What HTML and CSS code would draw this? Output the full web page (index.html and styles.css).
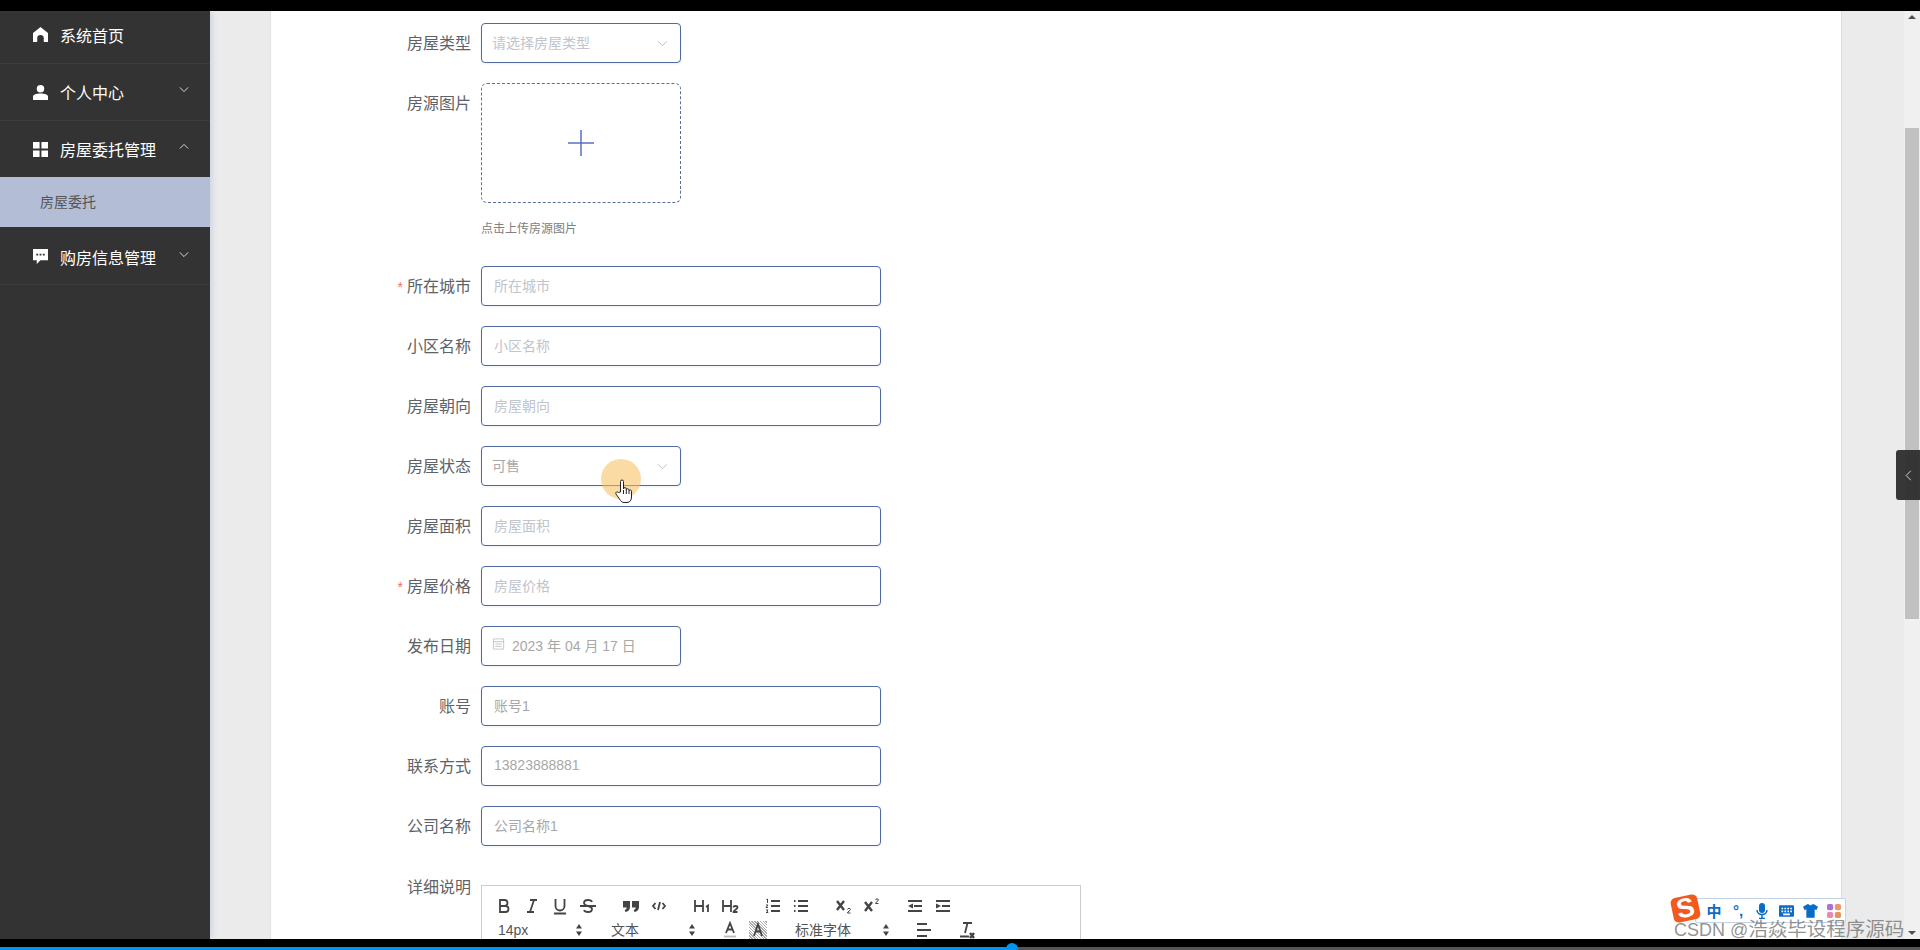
FILE: index.html
```html
<!DOCTYPE html>
<html lang="zh-CN">
<head>
    <meta charset="UTF-8">
    <title>房屋委托</title>
    <link rel="stylesheet" href="styles.css">
</head>
<body>
    <div class="top-bar"></div>
    <div class="app">
        <aside class="sidebar">
            <div class="menu-item menu-first">
                <svg class="menu-icon" viewBox="0 0 16 16"><path d="M8 0 16 6.500V16h-4.500v-4a3.500 3.500 0 0 0-7 0v4H0V6.500z"/></svg>
                <span>系统首页</span>
            </div>
            <div class="menu-item">
                <svg class="menu-icon" viewBox="0 0 16 16"><circle cx="8" cy="4" r="4"/><path d="M0 16v-3.500C0 10 3.500 9 8 9s8 1 8 3.500V16z"/></svg>
                <span>个人中心</span>
                <svg class="menu-arrow" viewBox="0 0 12 8"><path d="M1 1.500 6 6.500 11 1.500"/></svg>
            </div>
            <div class="menu-item menu-open">
                <svg class="menu-icon" viewBox="0 0 16 16"><path d="M0 0h7v7H0zM9 0h7v7H9zM0 9h7v7H0zM9 9h7v7H9z"/></svg>
                <span>房屋委托管理</span>
                <svg class="menu-arrow" viewBox="0 0 12 8"><path d="M1 6.500 6 1.500 11 6.500"/></svg>
            </div>
            <div class="submenu-item">房屋委托</div>
            <div class="menu-item">
                <svg class="menu-icon" viewBox="0 0 16 16"><path fill-rule="evenodd" d="M0 0h16v12H8l-4 4v-4H0zM3.500 5h2v2h-2zM7 5h2v2H7zM10.500 5h2v2h-2z"/></svg>
                <span>购房信息管理</span>
                <svg class="menu-arrow" viewBox="0 0 12 8"><path d="M1 1.500 6 6.500 11 1.500"/></svg>
            </div>
        </aside>

        <main class="content">
            <form class="panel">
                <div class="form-row">
                    <label class="form-label">房屋类型</label>
                    <div class="control select placeholder">请选择房屋类型
                        <svg class="select-arrow" viewBox="0 0 12 8"><path d="M1 1.500 6 6.500 11 1.500"/></svg>
                    </div>
                </div>
                <div class="form-row upload-row">
                    <label class="form-label">房源图片</label>
                    <div>
                        <div class="upload-box">
                            <svg class="upload-plus" viewBox="0 0 26 26"><path d="M13 0v26M0 13h26"/></svg>
                        </div>
                        <div class="upload-hint">点击上传房源图片</div>
                    </div>
                </div>
                <div class="form-row">
                    <label class="form-label required">所在城市</label>
                    <div class="control input placeholder">所在城市</div>
                </div>
                <div class="form-row">
                    <label class="form-label">小区名称</label>
                    <div class="control input placeholder">小区名称</div>
                </div>
                <div class="form-row">
                    <label class="form-label">房屋朝向</label>
                    <div class="control input placeholder">房屋朝向</div>
                </div>
                <div class="form-row">
                    <label class="form-label">房屋状态</label>
                    <div class="control select filled">可售
                        <svg class="select-arrow" viewBox="0 0 12 8"><path d="M1 1.500 6 6.500 11 1.500"/></svg>
                    </div>
                </div>
                <div class="form-row">
                    <label class="form-label">房屋面积</label>
                    <div class="control input placeholder">房屋面积</div>
                </div>
                <div class="form-row">
                    <label class="form-label required">房屋价格</label>
                    <div class="control input placeholder">房屋价格</div>
                </div>
                <div class="form-row">
                    <label class="form-label">发布日期</label>
                    <div class="control date filled">
                        <svg class="date-icon" viewBox="0 0 14 14"><path d="M1.500 1.500h11v11h-11zM1.500 4.500h11M3.500 7h7M3.500 9.500h7"/></svg>
                        2023 年 04 月 17 日
                    </div>
                </div>
                <div class="form-row">
                    <label class="form-label">账号</label>
                    <div class="control input filled">账号1</div>
                </div>
                <div class="form-row">
                    <label class="form-label">联系方式</label>
                    <div class="control input filled">13823888881</div>
                </div>
                <div class="form-row">
                    <label class="form-label">公司名称</label>
                    <div class="control input filled">公司名称1</div>
                </div>
                <div class="form-row editor-row">
                    <label class="form-label">详细说明</label>
                    <div class="editor">
                        <div class="toolbar">
                            <div class="tool-group">
                                <button class="tool" type="button"><svg viewBox="0 0 18 18"><path d="M5 3h4.500a3 3 0 0 1 0 6H5zM5 9h5.500a3 3 0 0 1 0 6H5z"/></svg></button>
                                <button class="tool" type="button"><svg viewBox="0 0 18 18"><path d="M7 3h7M4 15h7M11 3 7 15"/></svg></button>
                                <button class="tool" type="button"><svg viewBox="0 0 18 18"><path d="M4.500 2v7a4.500 4.500 0 0 0 9 0V2M3 16.500h12"/></svg></button>
                                <button class="tool" type="button"><svg viewBox="0 0 18 18"><path d="M13 5C12.500 3.500 11 3 9 3 6.500 3 5 4.200 5 6c0 1.700 1.800 2.500 4 3 2.200.5 4 1.300 4 3 0 1.800-1.500 3-4 3-2 0-3.500-.5-4-2M1 9h16"/></svg></button>
                            </div>
                            <div class="tool-group">
                                <button class="tool" type="button"><svg class="solid" viewBox="0 0 18 18"><path d="M1 4h7v6c0 3-2 4.500-4.500 5l-.8-2c1.300-.4 2-1.200 2-2.500H1zM10 4h7v6c0 3-2 4.500-4.500 5l-.8-2c1.300-.4 2-1.200 2-2.500H10z"/></svg></button>
                                <button class="tool" type="button"><svg viewBox="0 0 18 18"><path d="M5.500 6 3 9l2.500 3M12.500 6 15 9l-2.500 3M10 5 8 13"/></svg></button>
                            </div>
                            <div class="tool-group">
                                <button class="tool" type="button"><svg viewBox="0 0 18 18"><path d="M2 3v12M10 3v12M2 9h8M13 10l2-1.500V15"/></svg></button>
                                <button class="tool" type="button"><svg viewBox="0 0 18 18"><path d="M2 3v12M10 3v12M2 9h8M12.500 10.500c0-2 4-2 4 0 0 1.500-4 2.500-4 4.500h4"/></svg></button>
                            </div>
                            <div class="tool-group">
                                <button class="tool" type="button"><svg viewBox="0 0 18 18"><path d="M7 4h9M7 9h9M7 14h9"/><path class="tool-thin" d="M2.500 2.500l1-.5v4M2 8h2l-2 2.500h2M2 13h2l-1 1 1 1.500H2"/></svg></button>
                                <button class="tool" type="button"><svg viewBox="0 0 18 18"><path d="M6 4h10M6 9h10M6 14h10M2 4h1.500M2 9h1.500M2 14h1.500"/></svg></button>
                            </div>
                            <div class="tool-group">
                                <button class="tool" type="button"><svg viewBox="0 0 18 18"><path class="tool-bold" d="M2 4l7 9M9 4l-7 9"/><path class="tool-thin" d="M12.500 12.500c0-1.500 3-1.500 3 0 0 1-3 2-3 3.500h3"/></svg></button>
                                <button class="tool" type="button"><svg viewBox="0 0 18 18"><path class="tool-bold" d="M2 5l7 9M9 5l-7 9"/><path class="tool-thin" d="M12.500 3c0-1.500 3-1.500 3 0 0 1-3 2-3 3.500h3"/></svg></button>
                            </div>
                            <div class="tool-group">
                                <button class="tool" type="button"><svg viewBox="0 0 18 18"><path d="M2 4h14M8 9h8M2 14h14"/><path class="tool-fill" d="M7 6.500v5L2 9z"/></svg></button>
                                <button class="tool" type="button"><svg viewBox="0 0 18 18"><path d="M2 4h14M8 9h8M2 14h14"/><path class="tool-fill" d="M2 6.500v5L7 9z"/></svg></button>
                            </div>
                        </div>
                        <div class="toolbar">
                            <div class="tool-group">
                                <div class="picker">14px
                                    <svg class="picker-arrow" viewBox="0 0 8 14"><path d="M4 1 7 5.500H1zM4 13 1 8.500h6z"/></svg>
                                </div>
                            </div>
                            <div class="tool-group">
                                <div class="picker">文本
                                    <svg class="picker-arrow" viewBox="0 0 8 14"><path d="M4 1 7 5.500H1zM4 13 1 8.500h6z"/></svg>
                                </div>
                            </div>
                            <div class="tool-group">
                                <button class="tool" type="button"><svg viewBox="0 0 18 18"><path d="M5 12 9 2l4 10M6.500 8.500h5"/><path class="tool-swatch" d="M3 15.500h12"/></svg></button>
                                <button class="tool tool-hatch" type="button"><svg viewBox="0 0 18 18"><path d="M5 15 9 3l4 12M6.500 10.500h5"/></svg></button>
                            </div>
                            <div class="tool-group">
                                <div class="picker picker-wide">标准字体
                                    <svg class="picker-arrow" viewBox="0 0 8 14"><path d="M4 1 7 5.500H1zM4 13 1 8.500h6z"/></svg>
                                </div>
                            </div>
                            <div class="tool-group">
                                <button class="tool" type="button"><svg viewBox="0 0 18 18"><path d="M2 3h10M2 9h14M2 15h10"/></svg></button>
                            </div>
                            <div class="tool-group">
                                <button class="tool" type="button"><svg viewBox="0 0 18 18"><path d="M5 2h9M9.500 2 7 12M2 15.500h9"/><path class="tool-bold" d="M12 12l4 5M16 12l-4 5"/></svg></button>
                            </div>
                        </div>
                    </div>
                </div>
            </form>
        </main>
        <div class="scrollbar">
            <span class="scroll-up"></span>
            <div class="scroll-thumb"></div>
            <span class="scroll-down"></span>
        </div>

        <!-- things floating over the page -->
        <div class="side-tab">
            <svg viewBox="0 0 8 14"><path d="M7 1 1 7l6 6"/></svg>
        </div>
        <div class="cursor-spot"></div>
        <svg class="cursor-hand" viewBox="0 0 18 24"><path d="M5.500 13V2.500a1.500 1.500 0 0 1 3 0V10a1.400 1.400 0 0 1 2.800 0v.8a1.400 1.400 0 0 1 2.700 0v1a1.300 1.300 0 0 1 2.500.4V18c0 3-1.500 5.500-4.500 5.500H9c-1.500 0-2.500-.7-3.500-2L1 15c-1-1.500 1-3 2.500-1.500zM8.500 11v4M11.300 11v4M14 12v3"/></svg>
        <div class="ime-bar">
            <span class="ime-logo">S</span>
            <span class="ime-slot ime-zh">中</span>
            <span class="ime-slot ime-punct">°,</span>
            <span class="ime-slot">
                <svg class="ime-mic" viewBox="0 0 12 16"><rect x="3" y="0" width="6" height="10" rx="3"/><path class="ime-line" d="M1 7c0 6 10 6 10 0M6 12v3.500M3 15.500h6"/></svg>
            </span>
            <span class="ime-slot">
                <svg class="ime-icon" viewBox="0 0 18 14"><path fill-rule="evenodd" d="M1 0h16a1 1 0 0 1 1 1v12a1 1 0 0 1-1 1H1a1 1 0 0 1-1-1V1a1 1 0 0 1 1-1zM3 3v2h2V3zM6.500 3v2h2V3zM10 3v2h2V3zM13.500 3v2h2V3zM3 6.500v2h2v-2zM6.500 6.500v2h2v-2zM10 6.500v2h2v-2zM13.500 6.500v2h2v-2zM5 10v2h8v-2z"/></svg>
            </span>
            <span class="ime-slot">
                <svg class="ime-icon" viewBox="0 0 18 16"><path d="M5 0h2c.5 1.500 3.500 1.500 4 0h2l5 3-2 4-2-1v10H4V6L2 7 0 3z"/></svg>
            </span>
            <span class="ime-slot">
                <svg class="ime-grid" viewBox="0 0 16 16"><rect class="ime-a" width="7" height="7" rx="2"/><rect class="ime-b" x="9" width="7" height="7" rx="2"/><rect class="ime-c" y="9" width="7" height="7" rx="2"/><rect class="ime-d" x="9" y="9" width="7" height="7" rx="2"/></svg>
            </span>
        </div>
        <div class="watermark">CSDN @<span class="watermark-cn">浩焱毕设程序源码</span></div>
    </div>
    <div class="bottom-bar"></div>
    <div class="progress-bar">
        <span class="progress-dot"></span>
    </div>
</body>
</html>
```

FILE: styles.css
```css
* {
    box-sizing: border-box;
}
html, body {
    height: 100%;
}
body {
    margin: 0;
    display: flex;
    flex-direction: column;
    overflow: hidden;
    background-color: #000;
    font-family: "Liberation Sans", "Noto Sans CJK SC", sans-serif;
}
.top-bar {
    height: 11px;
    flex: none;
    background-color: #000;
}
.bottom-bar {
    height: 8px;
    flex: none;
    background-color: #000;
}
.app {
    height: 928px;
    flex: none;
    display: flex;
    position: relative;
    overflow: hidden;
    background-color: #ebebeb;
}

/* sidebar */
.sidebar {
    width: 210px;
    flex: none;
    background-color: #333;
    box-shadow: 2px 0 6px rgba(80, 120, 200, 0.2);
    position: relative;
    z-index: 1;
}
.menu-item {
    height: 57px;
    padding: 0 21px 0 33px;
    display: flex;
    align-items: center;
    gap: 12px;
    color: #fff;
    font-size: 16px;
    border-bottom: 1px solid #3d3d3d;
}
.menu-item.menu-first {
    height: 53px;
    padding-bottom: 5px;
}
.menu-item.menu-open {
    height: 56px;
    border-bottom: none;
}
.submenu-item + .menu-item {
    height: 58px;
    padding-top: 2px;
}
.menu-icon {
    width: 15px;
    height: 15px;
    fill: #fff;
}
.menu-arrow {
    width: 10px;
    height: 7px;
    margin-left: auto;
    margin-top: -5px;
    fill: none;
    stroke: #d8d8d8;
    stroke-width: 1.2;
}
.submenu-item {
    height: 50px;
    padding-left: 40px;
    line-height: 51px;
    font-size: 14px;
    color: #555;
    background-color: #b3bdd5;
}

/* form */
.content {
    flex: 1;
    min-width: 0;
    padding: 0 62px 0 60px;
}
.panel {
    height: 100%;
    padding: 12px 0 0 0;
    background-color: #fff;
    border-left: 1px solid #e2e2e2;
    border-right: 1px solid #dcdce0;
}
.form-row {
    display: flex;
    align-items: flex-start;
    gap: 10px;
    margin-bottom: 20px;
}
.form-label {
    width: 200px;
    height: 40px;
    flex: none;
    line-height: 42px;
    text-align: right;
    font-size: 16px;
    color: #606266;
}
.form-label.required::before {
    content: "*";
    margin-right: 4px;
    color: #f56c6c;
    font-size: 14px;
}
.control {
    height: 40px;
    display: flex;
    align-items: center;
    position: relative;
    padding: 0 12px 2px;
    font-size: 14px;
    background-color: #fff;
    border: 1px solid #4f6a9e;
    border-radius: 4px;
    box-shadow: 0 1px 2px rgba(96, 120, 173, 0.12);
}
.placeholder {
    color: #c0c4cc;
}
.filled {
    color: #a8a8a8;
}
.input {
    width: 400px;
}
.select {
    width: 200px;
    padding-left: 10px;
}
.date {
    width: 200px;
    padding-left: 10px;
    gap: 7px;
}
.select-arrow {
    position: absolute;
    right: 12px;
    top: 16px;
    width: 11px;
    height: 7px;
    fill: none;
    stroke: #b8bcc4;
    stroke-width: 1.1;
}
.date-icon {
    width: 13px;
    height: 14px;
    margin-top: -3px;
    fill: none;
    stroke: #c0c4cc;
    stroke-width: 1;
}
.upload-box {
    width: 200px;
    height: 120px;
    display: flex;
    align-items: center;
    justify-content: center;
    border: 1px dashed #5a6e9c;
    border-radius: 6px;
}
.upload-plus {
    width: 26px;
    height: 26px;
    fill: none;
    stroke: #5b70bd;
    stroke-width: 1.500;
}
.upload-hint {
    height: 43px;
    padding-top: 18px;
    line-height: 16px;
    font-size: 12px;
    color: #808080;
}

/* rich text editor */
.editor-row {
    margin-top: 39px;
}
.editor-row .form-label {
    line-height: 20px;
    margin-top: -7px;
}
.editor {
    width: 600px;
    height: 120px;
    border: 1px solid #ccc;
    padding: 8px 8px;
}
.toolbar {
    display: flex;
    height: 24px;
}
.tool-group {
    display: flex;
    margin-right: 15px;
}
.tool {
    width: 28px;
    height: 24px;
    padding: 3px 5px;
    background: none;
    border: none;
}
.tool svg {
    display: block;
    width: 18px;
    height: 18px;
    fill: none;
    stroke: #444;
    stroke-width: 1.800;
}
.tool svg.solid {
    fill: #444;
    stroke: none;
}
.tool svg .tool-fill {
    fill: #444;
    stroke: none;
}
.tool svg .tool-thin {
    stroke-width: 1;
}
.tool svg .tool-bold {
    stroke-width: 2.400;
}
.tool svg .tool-swatch {
    stroke: #bbb;
}
.tool-hatch svg {
    background-image: repeating-linear-gradient(45deg, #aaa 0, #aaa 1px, #fff 1px, #fff 2px);
}
.picker {
    width: 98px;
    height: 24px;
    padding-left: 8px;
    position: relative;
    line-height: 24px;
    font-size: 14px;
    color: #555;
}
.picker-wide {
    width: 108px;
}
.picker-arrow {
    position: absolute;
    right: 5px;
    top: 5px;
    width: 8px;
    height: 14px;
    fill: #444;
}

/* scrollbar */
.scrollbar {
    width: 16px;
    flex: none;
    position: relative;
    background-color: #f0f0f0;
}
.scroll-thumb {
    position: absolute;
    top: 117px;
    left: 1px;
    width: 14px;
    height: 491px;
    background-color: #c1c1c1;
}
.scroll-up, .scroll-down {
    position: absolute;
    left: 4px;
    border-left: 4px solid transparent;
    border-right: 4px solid transparent;
}
.scroll-up {
    top: 4px;
    border-bottom: 4px solid #505050;
}
.scroll-down {
    bottom: 4px;
    border-top: 4px solid #505050;
}

/* overlays */
.side-tab {
    position: absolute;
    top: 439px;
    right: 0;
    width: 24px;
    height: 50px;
    display: flex;
    align-items: center;
    padding-left: 9px;
    background-color: rgba(45, 45, 45, 0.95);
    border-radius: 3px 0 0 3px;
}
.side-tab svg {
    width: 7px;
    height: 11px;
    fill: none;
    stroke: #ddd;
    stroke-width: 1.200;
}
.cursor-spot {
    position: absolute;
    left: 601px;
    top: 448px;
    width: 40px;
    height: 40px;
    border-radius: 50%;
    background-color: rgba(245, 190, 90, 0.55);
}
.cursor-hand {
    position: absolute;
    left: 615px;
    top: 468px;
    width: 18px;
    height: 24px;
    fill: #fff;
    stroke: #222;
    stroke-width: 1;
}
.ime-bar {
    position: absolute;
    left: 1695px;
    top: 887px;
    width: 151px;
    height: 25px;
    padding-left: 6px;
    display: flex;
    align-items: center;
    background-color: #fff;
    border: 1px solid #c5d3e8;
    border-radius: 2px;
}
.ime-logo {
    position: absolute;
    left: -24px;
    top: -3px;
    width: 27px;
    height: 25px;
    transform: rotate(-12deg);
    background-color: #f2591d;
    border-radius: 5px;
    color: #fff;
    font-weight: bold;
    font-size: 27px;
    line-height: 25px;
    text-align: center;
}
.ime-slot {
    width: 24px;
    flex: none;
    display: flex;
    align-items: center;
    justify-content: center;
}
.ime-zh {
    color: #0a6cc7;
    font-size: 15px;
    font-weight: bold;
}
.ime-punct {
    color: #0a6cc7;
    font-size: 15px;
    font-weight: bold;
}
.ime-mic {
    width: 12px;
    height: 16px;
    fill: #0a6cc7;
}
.ime-icon {
    width: 15px;
    height: 14px;
    fill: #0a6cc7;
}
.ime-grid {
    width: 14px;
    height: 14px;
}
.ime-line {
    fill: none;
    stroke: #0a6cc7;
    stroke-width: 1.500;
}
.ime-a { fill: #b06fd8; }
.ime-b { fill: #f0976a; }
.ime-c { fill: #e88ab0; }
.ime-d { fill: #e8925a; }
.watermark {
    position: absolute;
    left: 1674px;
    bottom: 0;
    line-height: 18px;
    font-size: 18px;
    white-space: nowrap;
    color: rgba(110, 110, 110, 0.75);
}
.watermark-cn {
    font-size: 19.500px;
}
.progress-bar {
    height: 3px;
    flex: none;
    position: relative;
    background: linear-gradient(to right, #0095f0 1012px, #555 1012px);
}
.progress-dot {
    position: absolute;
    left: 1006px;
    top: -4px;
    width: 12px;
    height: 12px;
    border-radius: 50%;
    background-color: #0095f0;
}
```
